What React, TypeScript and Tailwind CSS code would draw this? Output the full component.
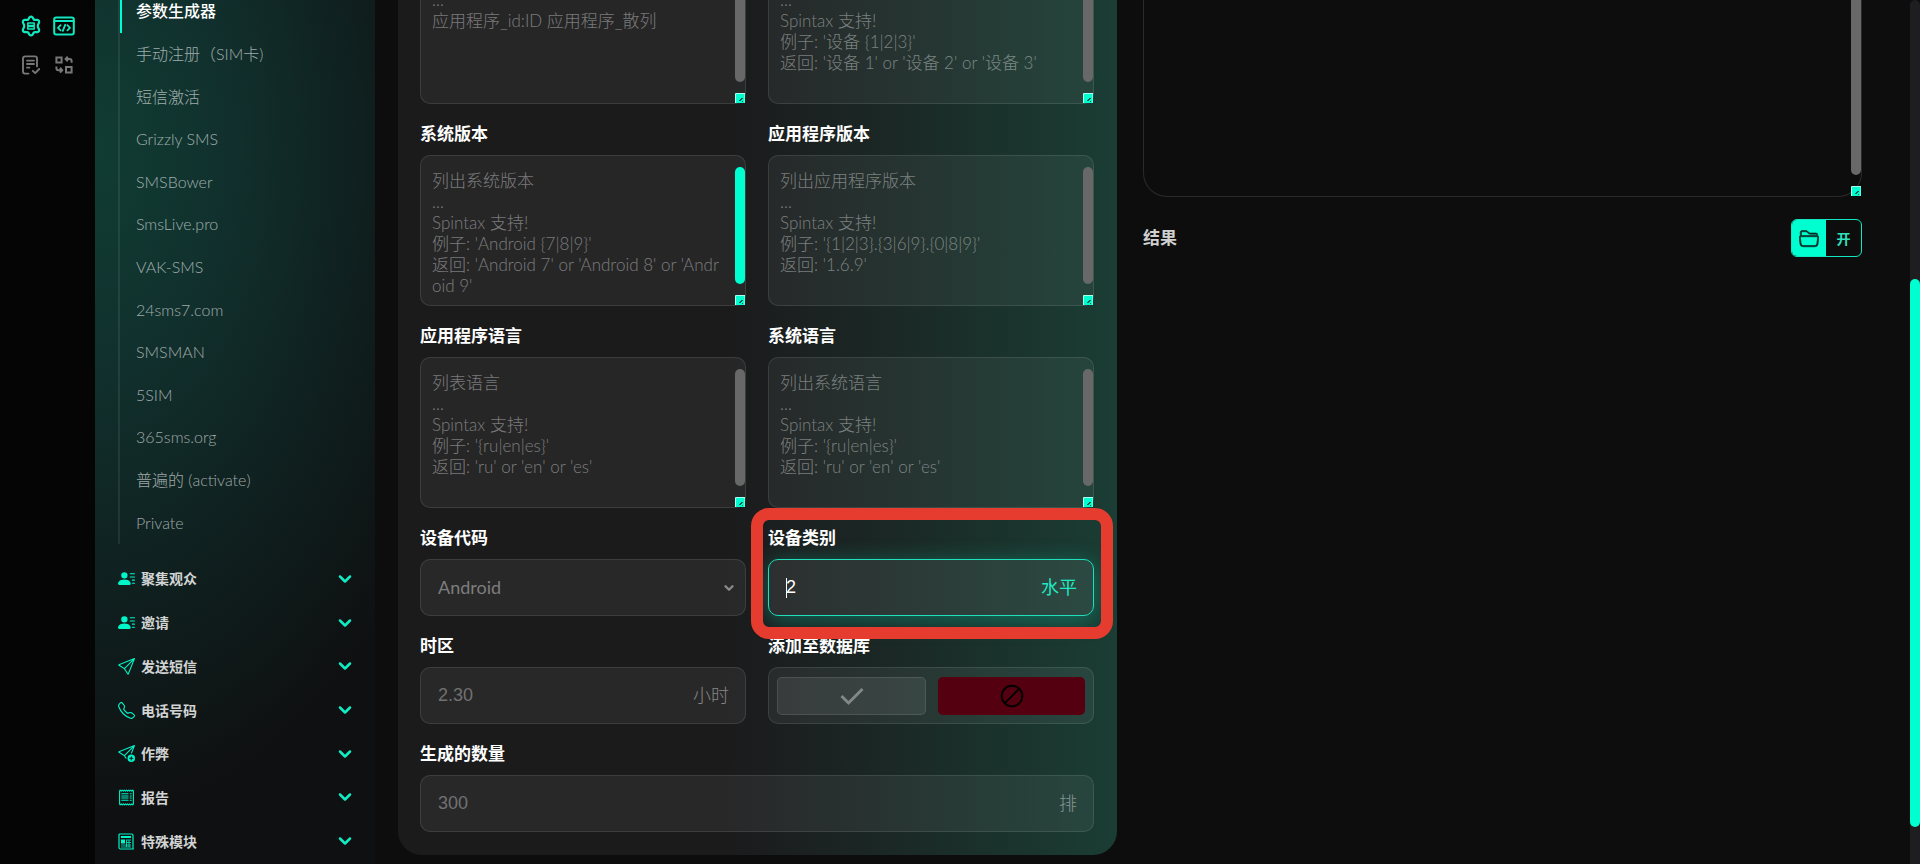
import { useState } from 'react';
import type { ReactNode } from 'react';
import clsx from 'clsx';
import { ChevronDown } from 'lucide-react';
import {
  BsBan,
  BsCheckLg,
  BsFolder2Open,
  BsPersonLinesFill,
  BsReceipt,
  BsSend,
  BsSendPlus,
  BsTelephone,
} from 'react-icons/bs';

const services = [
  '参数生成器',
  '手动注册（SIM卡)',
  '短信激活',
  'Grizzly SMS',
  'SMSBower',
  'SmsLive.pro',
  'VAK-SMS',
  '24sms7.com',
  'SMSMAN',
  '5SIM',
  '365sms.org',
  '普遍的 (activate)',
  'Private',
];

const groups = [
  { name: '聚集观众', icon: BsPersonLinesFill },
  { name: '邀请', icon: BsPersonLinesFill },
  { name: '发送短信', icon: BsSend },
  { name: '电话号码', icon: BsTelephone },
  { name: '作弊', icon: BsSendPlus },
  { name: '报告', icon: BsReceipt },
  { name: '特殊模块', icon: ModulesIcon },
];

function ModulesIcon({ className }: { className?: string }) {
  return (
    <svg className={className} viewBox="0 0 17 17" fill="none" stroke="currentColor">
      <path d="M2 1h11.500q1.500 0 1.500 1.500V15q0 1 .8 1H2.500Q1 16 1 14.500V2q0-1 1-1z" strokeWidth="1.2" />
      <path d="M3 4h10" strokeWidth="2" />
      <path d="M3 6.500h4v4H3z" fill="currentColor" stroke="none" />
      <path d="M8 7h5M8 9.500h5M3 12h10M3 14h10M8.500 7v7M11 7v7" strokeWidth=".8" />
    </svg>
  );
}

function GearIcon() {
  return (
    <svg className="h-[22px] w-[22px]" viewBox="0 0 22 22" fill="none" stroke="currentColor" strokeWidth="2.2" strokeLinejoin="round" strokeLinecap="round">
      <path d="M9.3 2.6Q11 .8 12.7 2.6L13.7 4.4Q14.3 5 15.2 4.9L17.2 4.8Q19.6 5.4 19 7.8L18 9.8Q17.5 11 18 12.2L19 14.2Q19.6 16.6 17.2 17.2L15.2 17.1Q14.3 17 13.7 17.6L12.7 19.4Q11 21.2 9.3 19.4L8.3 17.6Q7.7 17 6.800 17.1L4.800 17.2Q2.400 16.6 3 14.2L4 12.2Q4.500 11 4 9.800L3 7.800Q2.400 5.400 4.800 4.800L6.800 4.900Q7.700 5 8.300 4.400Z" />
      <path strokeWidth="1.500" d="M7.800 8h6.400v2.600H7.800zM7.800 11.500h6.400v2.600H7.800z" />
    </svg>
  );
}

function CodeIcon() {
  return (
    <svg className="h-[22px] w-[22px]" viewBox="0 0 22 22" fill="none" stroke="currentColor" strokeWidth="2" strokeLinejoin="round" strokeLinecap="round">
      <rect x="1.200" y="2.400" width="19.600" height="17" rx="2" />
      <path d="M1.500 6h19" />
      <path strokeWidth="1.800" d="M7.600 10.200 5 12.800l2.600 2.600M14.400 10.200l2.600 2.600-2.600 2.600M12.200 9.800l-2.400 6" />
    </svg>
  );
}

function ListIcon() {
  return (
    <svg className="h-[22px] w-[22px]" viewBox="0 0 22 22" fill="none" stroke="currentColor" strokeWidth="1.900" strokeLinejoin="round" strokeLinecap="round">
      <path d="M8.500 19.600H5a2 2 0 0 1-2-2V4.400a2 2 0 0 1 2-2h10a2 2 0 0 1 2 2v8" />
      <path d="M7 6.600h7M7 10h7M7 13.600h2.400M12.800 16.800l2.400 2.400 4-4.200" />
    </svg>
  );
}

function SwapIcon() {
  return (
    <svg className="h-[22px] w-[22px]" viewBox="0 0 22 22" fill="none" stroke="currentColor" strokeWidth="2">
      <path d="M3.400 3.400h5.200v5.200H3.400zM13 13h5.600v5.600H13z" />
      <path d="M14.800 2.600 12.600 5l2.200 2.400M12.800 5h3.800q2 0 2 2v1.800" />
      <path d="M7 18.600 9.200 16.200 7 13.800M9 16.200H5.400q-2 0-2-2v-1.800" />
    </svg>
  );
}

function ScrollGrip({ active = false, className }: { active?: boolean; className: string }) {
  return (
    <>
      <span className={clsx('absolute right-px w-[10px] rounded-full', active ? 'bg-[#00ffd0]' : 'bg-[#686868]', className)} />
      <svg className="absolute right-px bottom-px h-[10px] w-[10px]" viewBox="0 0 10 10">
        <path fill="#00ffd0" stroke="#a8fff0" strokeWidth="1" d="M.5 10V.5H10V10" />
        <path fill="#0b5b4c" d="M4 7h1V6h1V5h2v1H7v1H6v1H4zM7 8h1v1H7z" />
      </svg>
    </>
  );
}

const labelClass = 'mb-[9px] block text-[17px] leading-6 font-bold text-white';
const boxClass = 'flex h-[57px] items-center rounded-[10px] border border-white/10 bg-white/6';

function Area({ id, label, lines, active }: { id: string; label?: string; lines: string[]; active?: boolean }) {
  return (
    <div>
      {label && <label htmlFor={id} className={labelClass}>{label}</label>}
      <div className="relative h-[151px]">
        <textarea
          id={id}
          placeholder={lines.join('\n')}
          className="h-full w-full resize-none overflow-hidden rounded-[10px] border border-white/10 bg-white/5 py-[14px] pr-6 pl-[11px] text-[17px] leading-[21px] font-light break-all outline-none placeholder:text-white/40"
        />
        <ScrollGrip active={active} className="top-3 bottom-[22px]" />
      </div>
    </div>
  );
}

function Field({ id, label, className, children }: { id: string; label: string; className?: string; children: ReactNode }) {
  return (
    <div className={className}>
      <label htmlFor={id} className={labelClass}>{label}</label>
      {children}
    </div>
  );
}

export default function App() {
  const [category, setCategory] = useState('2');
  const [save, setSave] = useState(false);

  return (
    <div className="flex h-screen overflow-hidden bg-[#0d0d0e] font-[Lato,'Noto_Sans_CJK_SC',sans-serif] text-white">
      <nav className="grid w-[95px] shrink-0 grid-cols-2 content-start justify-items-center gap-y-[17px] bg-[#050505] px-[14px] pt-[15px] text-[#777]">
        <a href="#settings" aria-label="设置" className="text-[#10e8c0]"><GearIcon /></a>
        <a href="#code" aria-label="代码" className="text-[#10e8c0]"><CodeIcon /></a>
        <a href="#tasks" aria-label="任务"><ListIcon /></a>
        <a href="#convert" aria-label="转换"><SwapIcon /></a>
      </nav>

      <aside className="w-[280px] shrink-0 bg-[#0f1011] bg-[radial-gradient(ellipse_350px_580px_at_0px_150px,#103c33_0%,#11302d_38%,#0f201f_76%,#0f1011_115%)] px-[23px]">
        <ul className="-mt-[10px] flex h-[554px] flex-col border-l-2 border-white/8 text-[16px] font-light text-white/60">
          {services.map((name, i) => (
            <li key={name} className="flex flex-1">
              <a
                href="#service"
                className={clsx(
                  'flex flex-1 items-center border-l-2 pl-[14px]',
                  i === 0 ? 'border-[#00ffd0] font-medium text-white' : 'border-transparent'
                )}
              >
                {name}
              </a>
            </li>
          ))}
        </ul>
        <div className="mt-[13px] flex h-[306px] flex-col">
          {groups.map(({ name, icon: Icon }) => (
            <button key={name} type="button" className="flex flex-1 items-center text-[14px] font-bold text-[#d2d4d4]">
              <Icon className="mr-[6px] h-[17px] w-[17px] text-[#00f5c8]" />
              {name}
              <ChevronDown className="-mr-[3px] ml-auto h-5 w-5 text-[#10ecc4]" strokeWidth={3} />
            </button>
          ))}
        </div>
      </aside>

      <main className="grid min-w-0 flex-1 grid-cols-2 items-start gap-[26px] pr-12 pl-[23px]">
        <form className="-mt-[47px] grid grid-cols-2 gap-x-[22px] gap-y-[18px] rounded-b-[24px] bg-[linear-gradient(to_right,#1b1b1c_0%,#1b1b1c_46%,#1b2825_68%,#1a3d34_100%)] pr-[23px] pb-[23px] pl-[22px]">
          <Area id="app-id" lines={['列表 ID', '...', '应用程序_id:ID 应用程序_散列']} />
          <Area id="device" lines={['列出设备', '...', 'Spintax 支持!', "例子: '设备 {1|2|3}'", "返回: '设备 1' or '设备 2' or '设备 3'"]} />
          <Area
            id="system-version"
            label="系统版本"
            active
            lines={['列出系统版本', '...', 'Spintax 支持!', "例子: 'Android {7|8|9}'", "返回: 'Android 7' or 'Android 8' or 'Android 9'"]}
          />
          <Area
            id="app-version"
            label="应用程序版本"
            lines={['列出应用程序版本', '...', 'Spintax 支持!', "例子: '{1|2|3}.{3|6|9}.{0|8|9}'", "返回: '1.6.9'"]}
          />
          <Area
            id="app-lang"
            label="应用程序语言"
            lines={['列表语言', '...', 'Spintax 支持!', "例子: '{ru|en|es}'", "返回: 'ru' or 'en' or 'es'"]}
          />
          <Area
            id="system-lang"
            label="系统语言"
            lines={['列出系统语言', '...', 'Spintax 支持!', "例子: '{ru|en|es}'", "返回: 'ru' or 'en' or 'es'"]}
          />

          <Field id="device-code" label="设备代码">
            <div className={clsx(boxClass, 'relative')}>
              <select id="device-code" className="h-full w-full appearance-none bg-transparent pl-[17px] text-[18px] text-[#7d7d7e] outline-none">
                <option>Android</option>
              </select>
              <ChevronDown className="pointer-events-none absolute right-[9px] h-[14px] w-[14px] text-[#8a8a8a]" strokeWidth={4} />
            </div>
          </Field>

          <Field id="category" label="设备类别" className="relative">
            <div className="relative flex h-[57px] items-center rounded-[10px] border border-[#1fe0bb] bg-white/8 shadow-[0_4px_22px_rgba(0,230,190,0.35)]">
              <input
                id="category"
                value={category}
                onChange={(e) => setCategory(e.target.value)}
                className="h-full min-w-0 flex-1 bg-transparent pl-[17px] font-['Liberation_Sans',sans-serif] text-[18px] outline-none"
              />
              <span className="absolute left-[17px] h-5 w-px bg-white" />
              <span className="pr-4 text-[18px] text-[#1fe8c2]">水平</span>
            </div>
            <span className="pointer-events-none absolute -top-[18px] -right-[19px] -bottom-[23px] -left-[17px] z-10 rounded-[18px] border-[12px] border-[#e63c30]" />
          </Field>

          <Field id="timezone" label="时区">
            <div className={boxClass}>
              <input id="timezone" placeholder="2.30" className="h-full min-w-0 flex-1 bg-transparent pl-[17px] font-['Liberation_Sans',sans-serif] text-[18px] outline-none placeholder:text-white/35" />
              <span className="pr-4 text-[18px] font-light text-white/45">小时</span>
            </div>
          </Field>

          <div role="group" aria-labelledby="save-label">
            <span id="save-label" className={labelClass}>添加至数据库</span>
            <div className={clsx(boxClass, 'gap-3 p-[8px]')}>
              <button type="button" aria-label="是" aria-pressed={save} onClick={() => setSave(true)} className="flex h-[38px] flex-1 items-center justify-center rounded-[5px] border border-white/10 bg-white/8 text-[#808886]">
                <svg className="h-6 w-6" viewBox="0 0 24 24" fill="none" stroke="currentColor" strokeWidth="3">
                  <path d="m1.500 12 7 7L22.500 5" />
                </svg>
              </button>
              <button type="button" aria-label="否" aria-pressed={!save} onClick={() => setSave(false)} className="flex h-[38px] flex-1 items-center justify-center rounded-[5px] bg-[#550010] text-black">
                <BsBan className="h-[22px] w-[22px] overflow-visible" stroke="currentColor" strokeWidth={0.5} />
              </button>
            </div>
          </div>

          <Field id="amount" label="生成的数量" className="col-span-2">
            <div className={boxClass}>
              <input id="amount" placeholder="300" className="h-full min-w-0 flex-1 bg-transparent pl-[17px] font-['Liberation_Sans',sans-serif] text-[18px] outline-none placeholder:text-white/35" />
              <span className="pr-4 text-[18px] font-light text-white/45">排</span>
            </div>
          </Field>
        </form>

        <section>
          <div className="relative h-[197px]">
            <textarea aria-label="日志" className="h-full w-full resize-none rounded-b-[24px] border border-t-0 border-white/12 bg-transparent p-4 outline-none" />
            <ScrollGrip className="-top-3 bottom-[22px]" />
          </div>
          <div className="mt-[22px] flex items-center justify-between">
            <h2 className="text-[17px] font-bold text-[#d0d0d0]">结果</h2>
            <button type="button" className="flex h-[38px] w-[71px] items-center overflow-hidden rounded-[6px] border border-[#10e8c0] text-[14px] font-bold text-[#30e0bc]">
              <span className="flex h-full w-[34px] items-center justify-center bg-[#00ffd0] text-[#062a24]">
                <BsFolder2Open className="h-5 w-5" stroke="currentColor" strokeWidth={0.5} />
              </span>
              <span className="flex-1 text-center">开</span>
            </button>
          </div>
        </section>
      </main>

      <div className="w-[10px] shrink-0 rounded-t-full bg-[#1e1e20]">
        <div className="mt-[279px] h-[548px] rounded-full bg-[#00ffd0]" />
      </div>
    </div>
  );
}
